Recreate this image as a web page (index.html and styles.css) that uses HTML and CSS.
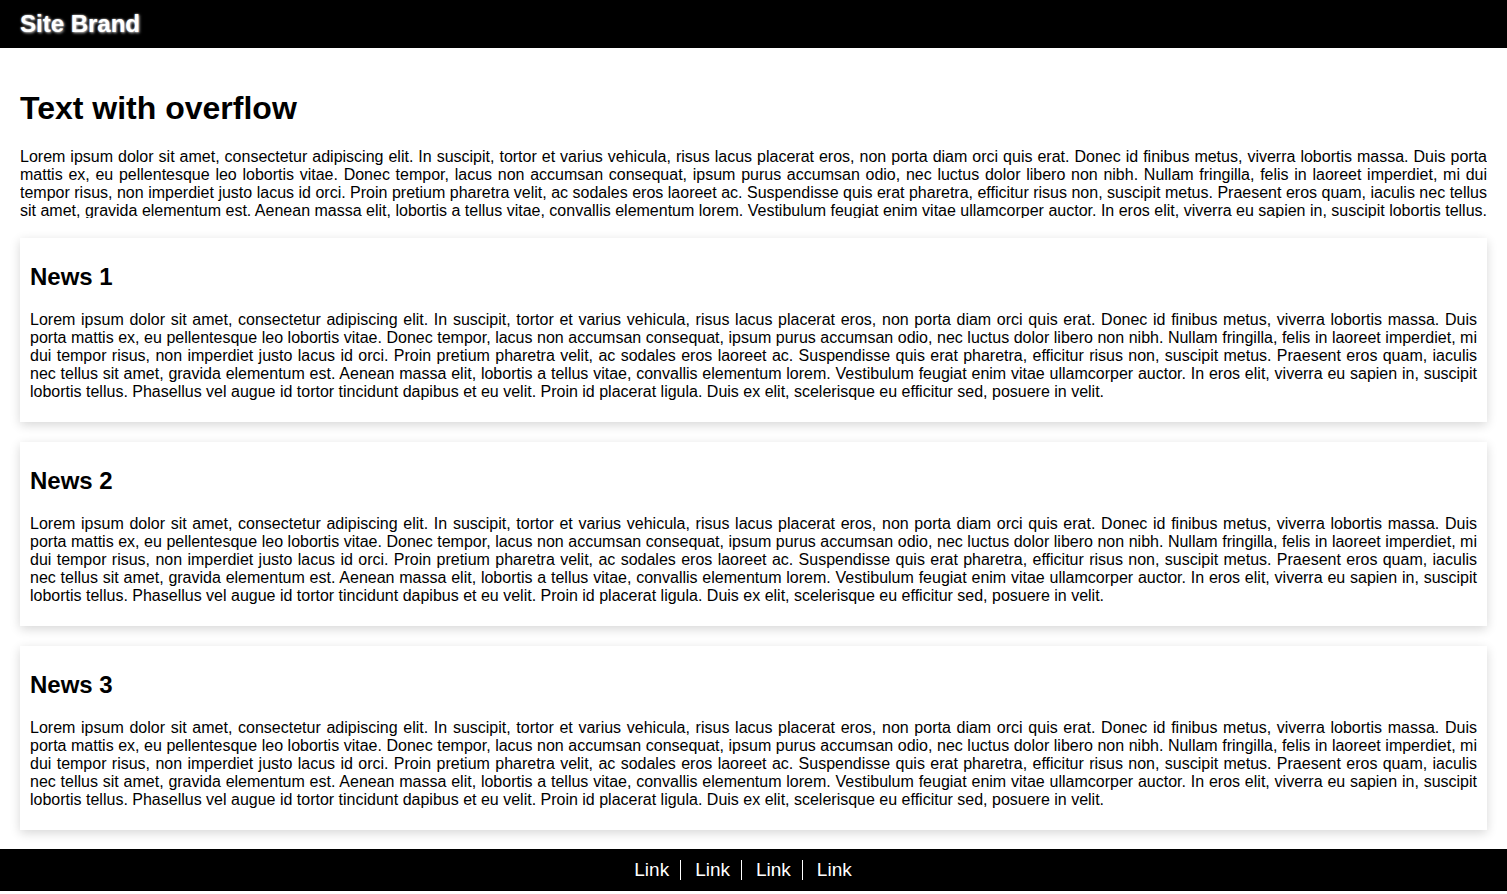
FILE: index.html
```html
<!DOCTYPE html>
<html lang="en">
<head>
<meta charset="utf-8">
<title>Site Brand</title>
<link rel="stylesheet" href="styles.css">
</head>
<body>
<header class="site-header">
  <div class="brand">Site Brand</div>
</header>
<main class="content">
  <h1 class="page-title">Text with overflow</h1>
  <p class="overflow-text">Lorem ipsum dolor sit amet, consectetur adipiscing elit. In suscipit, tortor et varius vehicula, risus lacus placerat eros, non porta diam orci quis erat. Donec id finibus metus, viverra lobortis massa. Duis porta mattis ex, eu pellentesque leo lobortis vitae. Donec tempor, lacus non accumsan consequat, ipsum purus accumsan odio, nec luctus dolor libero non nibh. Nullam fringilla, felis in laoreet imperdiet, mi dui tempor risus, non imperdiet justo lacus id orci. Proin pretium pharetra velit, ac sodales eros laoreet ac. Suspendisse quis erat pharetra, efficitur risus non, suscipit metus. Praesent eros quam, iaculis nec tellus sit amet, gravida elementum est. Aenean massa elit, lobortis a tellus vitae, convallis elementum lorem. Vestibulum feugiat enim vitae ullamcorper auctor. In eros elit, viverra eu sapien in, suscipit lobortis tellus. Phasellus vel augue id tortor tincidunt dapibus et eu velit. Proin id placerat ligula. Duis ex elit, scelerisque eu efficitur sed, posuere in velit.</p>

  <article class="card">
    <h2 class="card-title">News 1</h2>
    <p class="card-text">Lorem ipsum dolor sit amet, consectetur adipiscing elit. In suscipit, tortor et varius vehicula, risus lacus placerat eros, non porta diam orci quis erat. Donec id finibus metus, viverra lobortis massa. Duis porta mattis ex, eu pellentesque leo lobortis vitae. Donec tempor, lacus non accumsan consequat, ipsum purus accumsan odio, nec luctus dolor libero non nibh. Nullam fringilla, felis in laoreet imperdiet, mi dui tempor risus, non imperdiet justo lacus id orci. Proin pretium pharetra velit, ac sodales eros laoreet ac. Suspendisse quis erat pharetra, efficitur risus non, suscipit metus. Praesent eros quam, iaculis nec tellus sit amet, gravida elementum est. Aenean massa elit, lobortis a tellus vitae, convallis elementum lorem. Vestibulum feugiat enim vitae ullamcorper auctor. In eros elit, viverra eu sapien in, suscipit lobortis tellus. Phasellus vel augue id tortor tincidunt dapibus et eu velit. Proin id placerat ligula. Duis ex elit, scelerisque eu efficitur sed, posuere in velit.</p>
  </article>

  <article class="card">
    <h2 class="card-title">News 2</h2>
    <p class="card-text">Lorem ipsum dolor sit amet, consectetur adipiscing elit. In suscipit, tortor et varius vehicula, risus lacus placerat eros, non porta diam orci quis erat. Donec id finibus metus, viverra lobortis massa. Duis porta mattis ex, eu pellentesque leo lobortis vitae. Donec tempor, lacus non accumsan consequat, ipsum purus accumsan odio, nec luctus dolor libero non nibh. Nullam fringilla, felis in laoreet imperdiet, mi dui tempor risus, non imperdiet justo lacus id orci. Proin pretium pharetra velit, ac sodales eros laoreet ac. Suspendisse quis erat pharetra, efficitur risus non, suscipit metus. Praesent eros quam, iaculis nec tellus sit amet, gravida elementum est. Aenean massa elit, lobortis a tellus vitae, convallis elementum lorem. Vestibulum feugiat enim vitae ullamcorper auctor. In eros elit, viverra eu sapien in, suscipit lobortis tellus. Phasellus vel augue id tortor tincidunt dapibus et eu velit. Proin id placerat ligula. Duis ex elit, scelerisque eu efficitur sed, posuere in velit.</p>
  </article>

  <article class="card">
    <h2 class="card-title">News 3</h2>
    <p class="card-text">Lorem ipsum dolor sit amet, consectetur adipiscing elit. In suscipit, tortor et varius vehicula, risus lacus placerat eros, non porta diam orci quis erat. Donec id finibus metus, viverra lobortis massa. Duis porta mattis ex, eu pellentesque leo lobortis vitae. Donec tempor, lacus non accumsan consequat, ipsum purus accumsan odio, nec luctus dolor libero non nibh. Nullam fringilla, felis in laoreet imperdiet, mi dui tempor risus, non imperdiet justo lacus id orci. Proin pretium pharetra velit, ac sodales eros laoreet ac. Suspendisse quis erat pharetra, efficitur risus non, suscipit metus. Praesent eros quam, iaculis nec tellus sit amet, gravida elementum est. Aenean massa elit, lobortis a tellus vitae, convallis elementum lorem. Vestibulum feugiat enim vitae ullamcorper auctor. In eros elit, viverra eu sapien in, suscipit lobortis tellus. Phasellus vel augue id tortor tincidunt dapibus et eu velit. Proin id placerat ligula. Duis ex elit, scelerisque eu efficitur sed, posuere in velit.</p>
  </article>
</main>
<footer class="site-footer">
  <nav class="footer-nav">
    <a class="footer-link" href="#">Link</a>
    <a class="footer-link" href="#">Link</a>
    <a class="footer-link" href="#">Link</a>
    <a class="footer-link" href="#">Link</a>
  </nav>
</footer>
</body>
</html>
```

FILE: styles.css
```css
html, body {
  margin: 0;
  padding: 0;
  background: #fff;
  color: #000;
  font-family: "Liberation Sans", Arial, sans-serif;
}

body {
  padding-bottom: 3px;
}

.site-header {
  height: 48px;
  background: #000;
  display: flex;
  align-items: center;
  padding: 0 20px;
}

.brand {
  color: #fff;
  font-size: 24px;
  font-weight: bold;
  text-shadow: 0 0 2px rgba(255, 255, 255, 0.7), 1px 1px 3px rgba(200, 200, 200, 0.9);
}

.content {
  padding: 20px 20px 0;
}

.page-title {
  font-size: 32px;
  font-weight: bold;
  line-height: 37px;
  margin: 22px 0 21px;
}

.overflow-text {
  font-size: 16px;
  line-height: 18px;
  text-align: justify;
  height: 70px;
  overflow: hidden;
  margin: 0 0 20px;
}

.card {
  background: #fff;
  padding: 5px 10px;
  margin: 0 0 20px;
  box-shadow: 0 3px 10px rgba(0, 0, 0, 0.16);
}

.card:last-child {
  margin-bottom: 19px;
}

.card-title {
  font-size: 24px;
  font-weight: bold;
  line-height: 28px;
  margin: 20px 0;
}

.card-text {
  font-size: 16px;
  line-height: 18px;
  text-align: justify;
  margin: 0 0 16px;
}

.site-footer {
  height: 42px;
  background: #000;
  display: flex;
  align-items: center;
  justify-content: center;
  padding-right: 24px;
}

.footer-nav {
  display: flex;
  align-items: center;
}

.footer-link {
  color: #fff;
  text-decoration: none;
  font-size: 19px;
  line-height: 20px;
  padding: 0 11px 0 14px;
}

.footer-link + .footer-link {
  border-left: 1px solid #fff;
}
```
